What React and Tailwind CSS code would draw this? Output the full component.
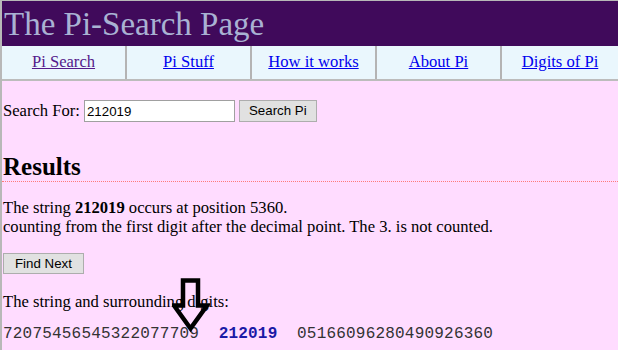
import React from 'react';

const navLinks = [
  { label: 'Pi Search', visited: true },
  { label: 'Pi Stuff' },
  { label: 'How it works' },
  { label: 'About Pi' },
  { label: 'Digits of Pi' },
];

const DownArrow = () => (
  <svg
    className="absolute left-[170px] top-[-14px]"
    width="38"
    height="56"
    viewBox="0 0 38 56"
    fill="none"
  >
    <path
      d="M11 2.5 H26 V27.5 H35 L18.5 50.5 L2 27.5 H11 Z"
      stroke="#000"
      strokeWidth="4.5"
      strokeLinejoin="miter"
    />
  </svg>
);

export default function App() {
  return (
    <div className="w-[618px] h-[350px] overflow-hidden bg-[#ffdcff] border-t border-l-2 border-[#b8b8b8] font-['Liberation_Serif',serif] text-[16.6px] text-black">
      {/* Header */}
      <div className="h-[45px] bg-[#400a5b] pl-[2px]">
        <h1 className="text-[33px] leading-[46px] text-[#a9b2d3]">The Pi-Search Page</h1>
      </div>

      {/* Nav */}
      <div className="flex h-[35px] bg-[#eaf7fd] border-b-2 border-[#bcbcbc]">
        {navLinks.map((link, i) => (
          <div
            key={link.label}
            className={`flex items-center justify-center ${
              i === navLinks.length - 1 ? 'flex-1' : 'w-[125px] border-r-2 border-[#b4b4b4]'
            }`}
          >
            <a
              href="#"
              className={`underline ${link.visited ? 'text-[#551a8b]' : 'text-[#0000ee]'}`}
            >
              {link.label}
            </a>
          </div>
        ))}
      </div>

      {/* Search form */}
      <div className="flex items-center pl-[1px] pt-[18px]">
        <span>Search For:</span>
        <input
          defaultValue="212019"
          className="ml-[4px] w-[151px] h-[22px] bg-white border border-[#a0a0a0] px-[2px] text-[13.3px] font-['Liberation_Sans',sans-serif] outline-none"
        />
        <button className="ml-[4px] h-[22px] px-[9px] bg-[#e1e1e1] border border-[#adadad] text-[13.3px] font-['Liberation_Sans',sans-serif]">
          Search Pi
        </button>
      </div>

      {/* Results */}
      <h2 className="mt-[30px] pl-[1px] text-[25px] font-bold leading-[26px]">Results</h2>
      <div className="mt-[1px] border-b border-dotted border-[#ff7a7a]" />

      <p className="mt-[16px] pl-[1px] leading-[19px]">
        The string <b>212019</b> occurs at position 5360.
        <br />
        counting from the first digit after the decimal point. The 3. is not counted.
      </p>

      <button className="mt-[17px] ml-[1px] h-[21px] px-[11px] bg-[#e1e1e1] border border-[#adadad] text-[13.3px] font-['Liberation_Sans',sans-serif]">
        Find Next
      </button>

      <div className="relative">
        <DownArrow />
        <p className="mt-[16px] pl-[1px] leading-[19px]">The string and surrounding digits:</p>
        <p className="mt-[11px] pl-[1px] whitespace-pre font-['Liberation_Mono',monospace] text-[16px] tracking-[0.2px] text-[#333]">
          {'72075456545322077709  '}
          <b className="text-[#1a1aa6]">212019</b>
          {'  05166096280490926360'}
        </p>
      </div>
    </div>
  );
}
